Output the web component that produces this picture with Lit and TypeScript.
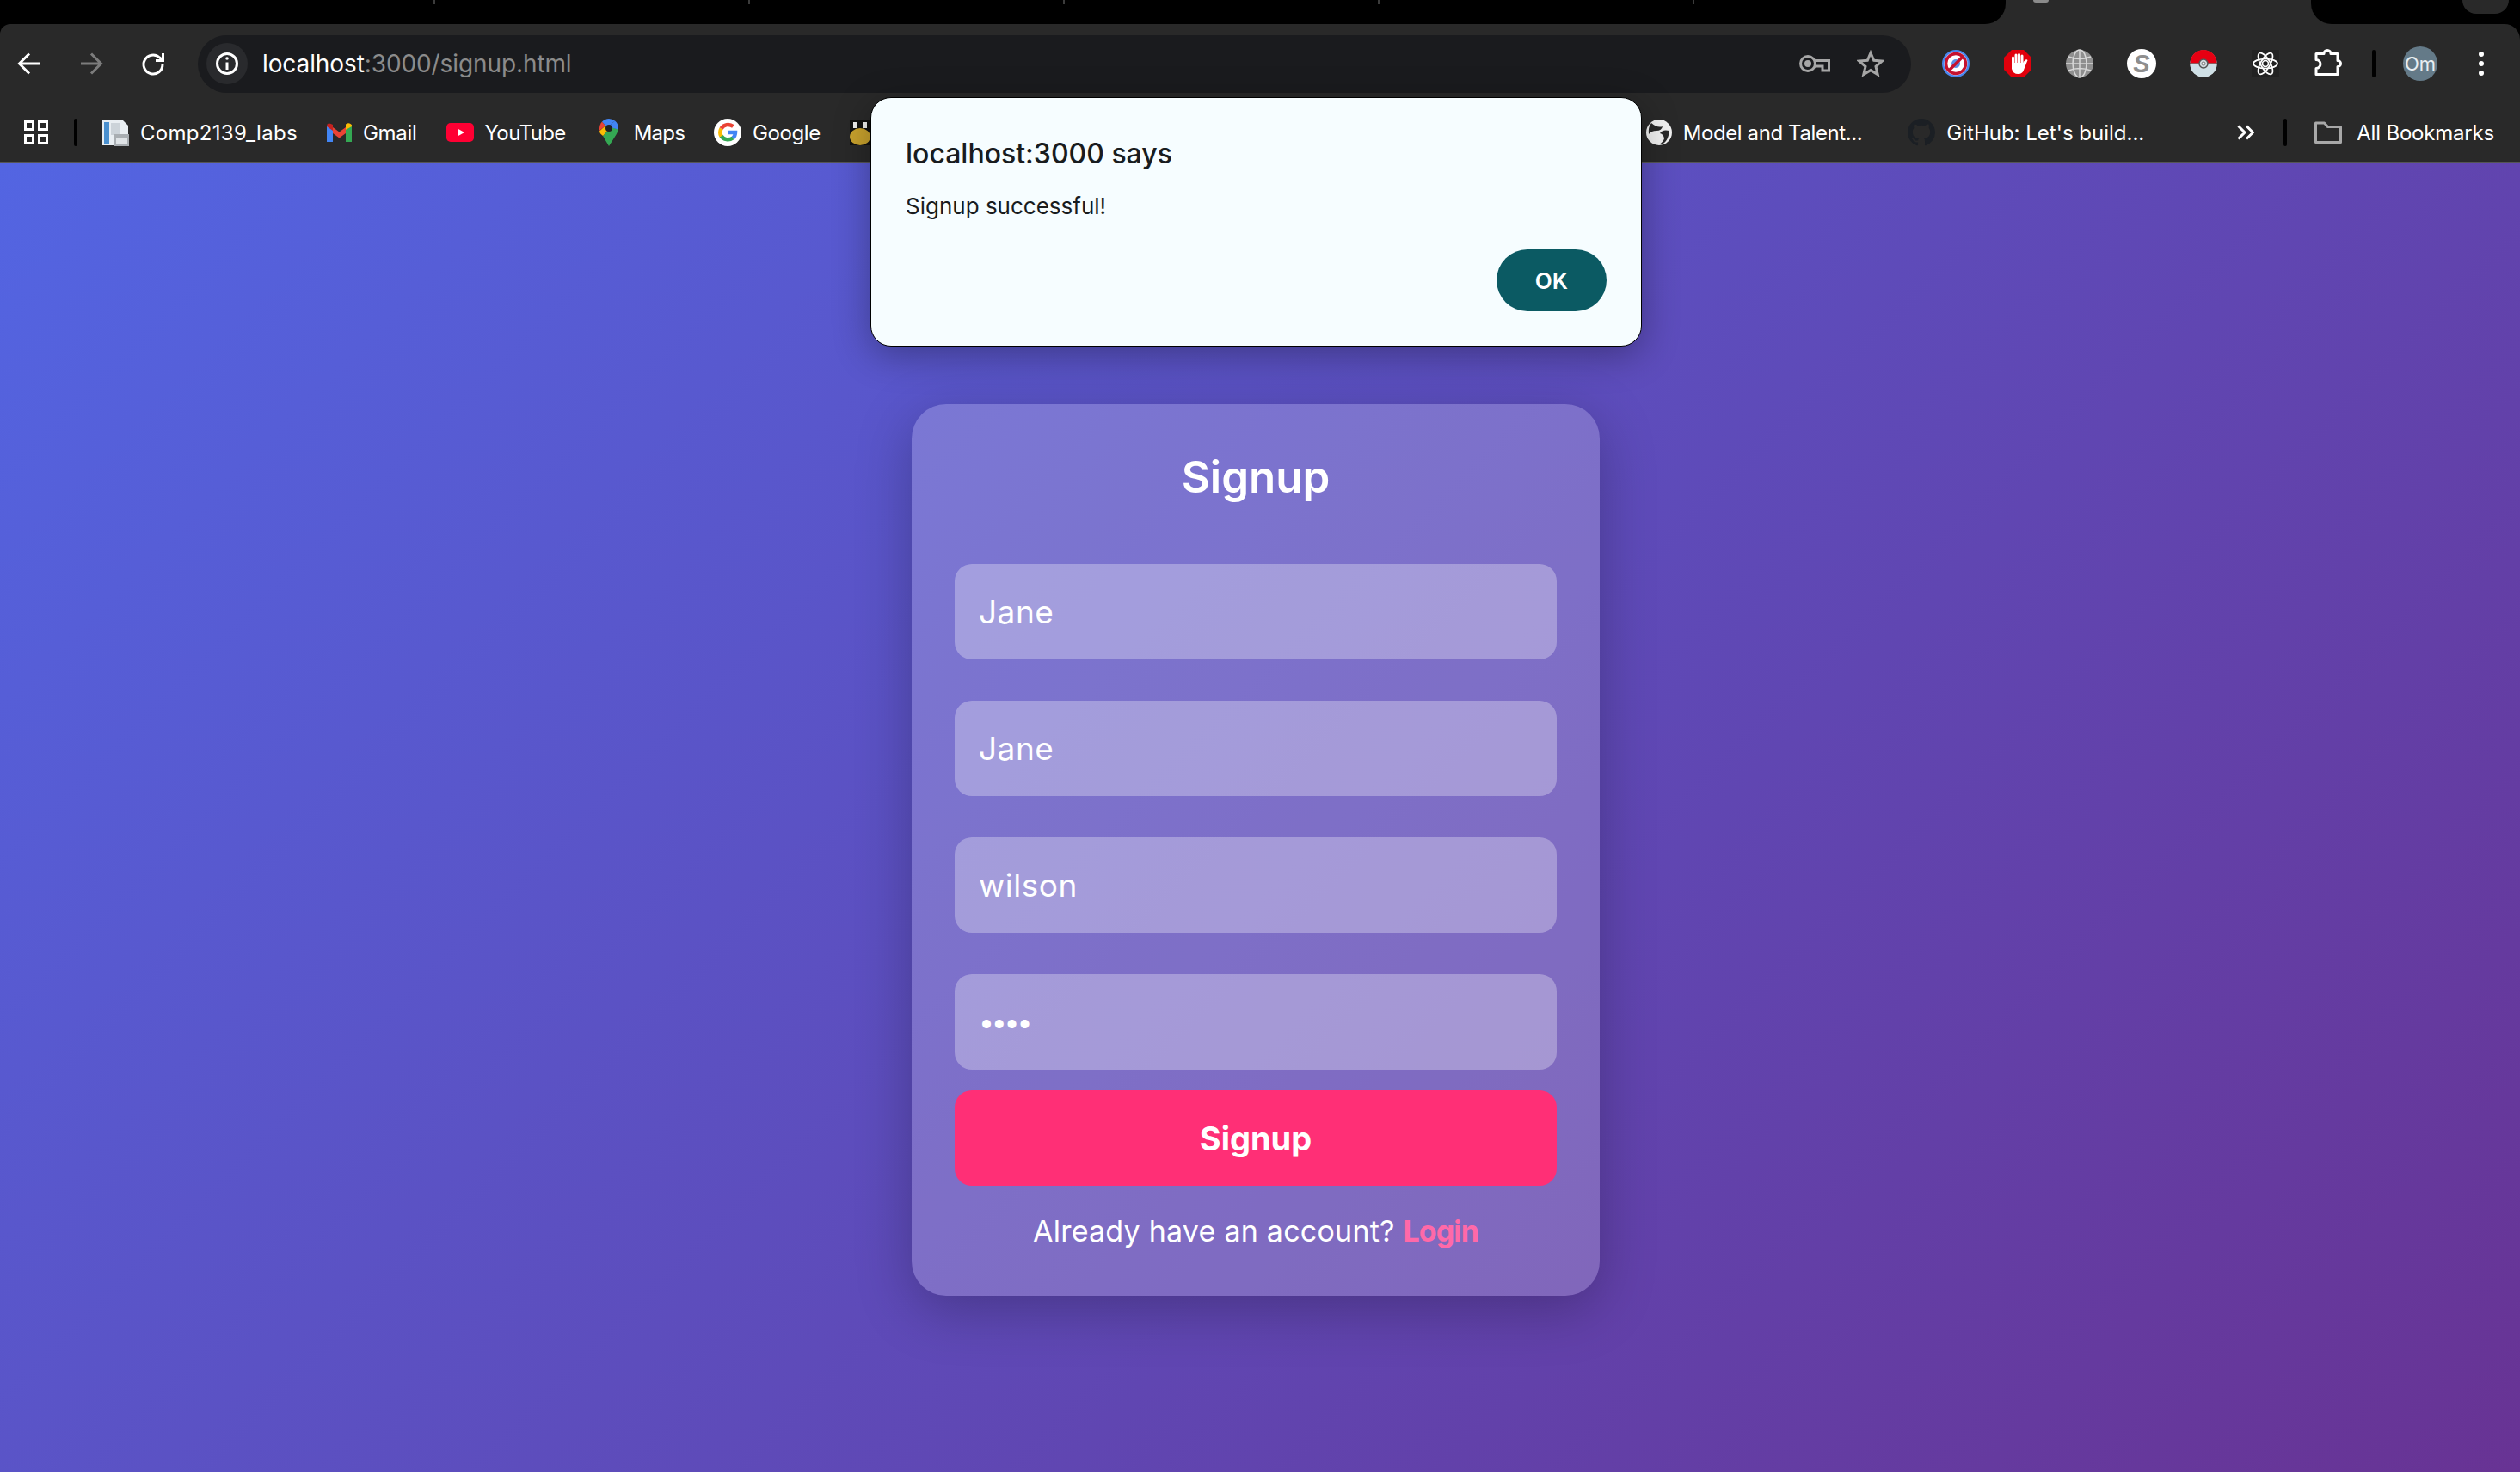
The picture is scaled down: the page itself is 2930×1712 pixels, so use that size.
import { LitElement, css, html } from 'lit'
import { customElement } from 'lit/decorators.js'

const nav = {
  back: html`<svg width="36" height="36" viewBox="0 0 36 36" fill="none" stroke="#fff" stroke-width="3"><path d="M30 18H7M18 6.500 6.500 18 18 29.500"/></svg>`,
  forward: html`<svg width="36" height="36" viewBox="0 0 36 36" fill="none" stroke="#7c7c7c" stroke-width="3"><path d="M6 18h23M18 6.500 29.500 18 18 29.500"/></svg>`,
  reload: html`<svg width="36" height="36" viewBox="0 0 36 36" fill="none" stroke="#fff" stroke-width="3"><path d="M29 19A11 11 0 1 1 25.500 11L29 14"/><path d="M29.500 6v8.500H21"/></svg>`,
  info: html`<svg width="36" height="36" viewBox="0 0 36 36" fill="none" stroke="#fff" stroke-width="3"><circle cx="18" cy="18" r="11.500"/><path d="M18 16.500V25"/><circle cx="18" cy="12" r="1.800" fill="#fff" stroke="none"/></svg>`,
  key: html`<svg width="36" height="20" viewBox="0 0 36 20" fill="none" stroke="#a6a6a6" stroke-width="3"><circle cx="10" cy="10" r="8.500"/><circle cx="10" cy="10" r="4" fill="#a6a6a6" stroke="none"/><path d="M18 6.500h16.500V18H27v-5H18.500"/></svg>`,
  star: html`<svg width="32" height="32" viewBox="0 0 32 32" fill="none" stroke="#a6a6a6" stroke-width="3" stroke-linejoin="miter"><path d="M16 3.500l3.700 8.800 9.500.8-7.200 6.200 2.200 9.300-8.200-5-8.200 5 2.200-9.300-7.200-6.200 9.500-.8z"/></svg>`,
}

const extensions = [
  html`<svg width="34" height="34" viewBox="0 0 34 34"><circle cx="17" cy="17" r="16" fill="#4a86ee"/><circle cx="17" cy="17" r="13.500" fill="#fff"/><circle cx="17" cy="17" r="5" fill="#5b8fe6"/><circle cx="17" cy="17" r="11.500" fill="none" stroke="#c5112f" stroke-width="3.500"/><path d="M25 9 9 25" stroke="#c5112f" stroke-width="3.500"/></svg>`,
  html`<svg width="34" height="34" viewBox="0 0 34 34"><path d="M10 1h14l9 9v14l-9 9H10l-9-9V10z" fill="#e1000c"/><g stroke="#fff" stroke-linecap="round" stroke-width="3"><path d="M11.500 10v11M15 7v13M18.500 6.500V20M22 8v12"/></g><path d="M10 16h13.500v-1l3.500-3 1.500 1-4 10q-1.500 6-7 6-6 0-7.500-6z" fill="#fff"/></svg>`,
  html`<svg width="34" height="34" viewBox="0 0 34 34" fill="none" stroke="#d8d8d8" stroke-width="1.500"><circle cx="17" cy="17" r="16" fill="#8f8f8f" stroke="none"/><path d="M17 1v32M1 17h32M4 9q13 5 26 0M4 25q13-5 26 0"/><ellipse cx="17" cy="17" rx="8" ry="16"/></svg>`,
  html`<svg width="34" height="34" viewBox="0 0 34 34"><circle cx="17" cy="17" r="17" fill="#fff"/><text x="17" y="27" text-anchor="middle" font-family="Liberation Sans" font-size="29" font-weight="700" font-style="italic" fill="#8e8e8e">S</text></svg>`,
  html`<svg width="32" height="32" viewBox="0 0 32 32"><circle cx="16" cy="16" r="15.500" fill="#fff"/><path d="M.5 17a15.500 14.500 0 0 0 31 0z" fill="#cfe0e6"/><path d="M.5 15.500a15.500 15.500 0 0 1 31 0z" fill="#e60012"/><path d="M0 16h32" stroke="#333" stroke-width="1"/><circle cx="16" cy="16" r="5" fill="#cfd8dc" stroke="#555" stroke-width="1.500"/><circle cx="16" cy="16" r="2" fill="#fff" stroke="#777"/></svg>`,
  html`<svg width="32" height="32" viewBox="0 0 32 32"><rect width="32" height="32" fill="#222"/><g fill="none" stroke="#fff" stroke-width="1.700"><ellipse cx="16" cy="16" rx="14" ry="5.500"/><ellipse cx="16" cy="16" rx="14" ry="5.500" transform="rotate(60 16 16)"/><ellipse cx="16" cy="16" rx="14" ry="5.500" transform="rotate(120 16 16)"/><circle cx="16" cy="16" r="3.500"/></g></svg>`,
  html`<svg width="36" height="36" viewBox="0 0 36 36" fill="none" stroke="#fff" stroke-width="3" stroke-linejoin="round"><path d="M5 6.500h9a4 4 0 0 1 8 0h8v8a3.500 3.500 0 0 1 0 7v9H5v-7a5 5 0 0 0 0-10z"/></svg>`,
]

const bookmarksLeft = [
  {
    label: 'Comp2139_labs',
    track: 0.3,
    icon: html`<svg width="32" height="32" viewBox="0 0 32 32"><path d="M1 1h23l7 7v23H1z" fill="#e9eef2"/><path d="M3 4h6v25H3z" fill="#4a90cf"/><path d="M11 5h10v14H11z" fill="#ccd3d9"/><path d="M15 18h17v14H15z" fill="#a9aeb2"/><path d="M17 22h13v8H17z" fill="#dfe3e6"/></svg>`,
  },
  {
    label: 'Gmail',
    track: -0.3,
    icon: html`<svg width="29" height="32" viewBox="0 0 29 22"><path d="M0 22V3l7 5v14z" fill="#4285f4"/><path d="M22 22V8l7-5v19z" fill="#34a853"/><path d="M7 12V5l7.500 5.500L22 5v7l-7.500 5.500z" fill="#ea4335"/><path d="M22 8V1.500q3-2 5.500-.5T29 4z" fill="#fbbc04"/><path d="M0 3.500Q0 1 2 .5T7 2v7L0 4z" fill="#c5221f"/></svg>`,
  },
  {
    label: 'YouTube',
    track: -0.6,
    icon: html`<svg width="32" height="32" viewBox="0 0 32 32"><rect y="5" width="32" height="22" rx="5" fill="#ff0033"/><path d="M13 11.500 21 16l-8 4.500z" fill="#fff"/></svg>`,
  },
  {
    label: 'Maps',
    track: -0.8,
    icon: html`<svg width="32" height="32" viewBox="0 0 32 32"><path d="M16 32 9 20l9-10 8.500 2q.5 3-2 6.500z" fill="#34a853"/><path d="M5 14.500q0 2.500 4 5.500l7-8-4-4z" fill="#fbbc04"/><path d="M8 3.500Q4.500 7 5 14l7-6z" fill="#ea4335"/><path d="M8 3.500Q11.500 0 16 0q4 0 7 2.500l-8 7-3-1.500z" fill="#4285f4"/><path d="M23 2.500Q27 6 27 11l-.5 1.500L18 10l-3-.5z" fill="#4285f4"/><circle cx="16" cy="11" r="4" fill="#222"/></svg>`,
  },
  {
    label: 'Google',
    track: -0.4,
    icon: html`<svg width="32" height="32" viewBox="0 0 32 32" fill="none" stroke-width="4.500"><circle cx="16" cy="16" r="16" fill="#fff"/><path d="M16 16h9a9.500 9.500 0 0 1-3 6.800" stroke="#4285f4"/><path d="M22 22.500a9.500 9.500 0 0 1-13.500-2.500" stroke="#34a853"/><path d="M8.500 20.500a9.500 9.500 0 0 1 0-9" stroke="#fbbc04"/><path d="M8.500 11.500a9.500 9.500 0 0 1 14-2.500" stroke="#ea4335"/></svg>`,
  },
]

const github = 'M8 0C3.58 0 0 3.58 0 8c0 3.54 2.29 6.53 5.47 7.59.4.07.55-.17.55-.38 0-.19-.01-.82-.01-1.49-2.01.37-2.53-.49-2.69-.94-.09-.23-.48-.94-.82-1.13-.28-.15-.68-.52-.01-.53.63-.01 1.08.58 1.23.82.72 1.21 1.87.87 2.33.66.07-.52.28-.87.51-1.07-1.78-.2-3.64-.89-3.64-3.95 0-.87.31-1.59.82-2.15-.08-.2-.36-1.02.08-2.12 0 0 .67-.21 2.2.82.64-.18 1.32-.27 2-.27.68 0 1.36.09 2 .27 1.53-1.04 2.2-.82 2.2-.82.44 1.1.16 1.92.08 2.12.51.56.82 1.27.82 2.15 0 3.07-1.87 3.75-3.65 3.95.29.25.54.73.54 1.48 0 1.07-.01 1.93-.01 2.2 0 .21.15.46.55.38A8.013 8.013 0 0016 8c0-4.42-3.58-8-8-8z'

@customElement('app-root')
export class AppRoot extends LitElement {
  render() {
    return html`
      <div class="strip">
        <div class="strip-left">
          ${[0, 1, 2, 3, 4].map(() => html`<span class="tab-stub"></span>`)}
        </div>
        <div class="active-tab"><span class="favicon"></span></div>
        <div class="strip-right"><span class="new-tab"></span></div>
      </div>

      <div class="toolbar">
        <div class="nav">${nav.back}${nav.forward}${nav.reload}</div>
        <div class="omnibox">
          <span class="chip">${nav.info}</span>
          <span class="url">localhost<span class="dim">:3000/signup.html</span></span>
          <span class="key">${nav.key}</span>
          <span class="star">${nav.star}</span>
        </div>
        <div class="extensions">
          ${extensions.map((icon) => html`<span class="ext">${icon}</span>`)}
        </div>
        <span class="tool-divider"></span>
        <span class="avatar">Om</span>
        <span class="menu"><i></i><i></i><i></i></span>
      </div>

      <div class="bookmarks">
        <svg class="apps" width="28" height="28" viewBox="0 0 28 28" fill="none" stroke="#fff" stroke-width="3">
          <path d="M1.500 1.500h9v9h-9zM17.500 1.500h9v9h-9zM1.500 17.500h9v9h-9zM17.500 17.500h9v9h-9z" />
        </svg>
        <span class="bar-divider"></span>
        <div class="marks">
          ${bookmarksLeft.map(
            (b) => html`<span class="mark">${b.icon}<span style="letter-spacing:${b.track}px">${b.label}</span></span>`
          )}
          <svg class="penguin" width="24" height="30" viewBox="0 0 24 30">
            <rect width="24" height="30" fill="#111" />
            <ellipse cx="12" cy="20" rx="12" ry="10" fill="#c9a22d" />
            <rect x="4" y="3" width="5" height="7" fill="#eee" />
            <rect x="15" y="3" width="5" height="7" fill="#eee" />
          </svg>
        </div>
        <div class="marks right">
          <span class="mark model">
            <svg width="30" height="30" viewBox="0 0 30 30">
              <circle cx="15" cy="15" r="15" fill="#f2f2f2" />
              <path d="M6 4q7 6 13 4-1 5-7 5T3 17Q2 9 6 4zM27 13q-8-2-11 3 4 1 5 6-1 4-6 7 10 0 12-16z" fill="#292929" />
            </svg>
            <span>Model and Talent...</span>
          </span>
          <span class="mark github">
            <svg width="32" height="32" viewBox="0 0 16 16"><path d=${github} fill="#1b1f24" /></svg>
            <span>GitHub: Let's build...</span>
          </span>
          <svg class="more" width="20" height="18" viewBox="0 0 20 18" fill="none" stroke="#fff" stroke-width="3">
            <path d="M1.500 1.500 9 9l-7.500 7.500M11 1.500 18.500 9 11 16.500" />
          </svg>
          <span class="bar-divider"></span>
          <span class="mark all">
            <svg width="32" height="26" viewBox="0 0 32 26" fill="none" stroke="#a8a8a8" stroke-width="3" stroke-linejoin="round">
              <path d="M1.500 2h10l4 4.500h15v18h-29z" />
            </svg>
            <span>All Bookmarks</span>
          </span>
        </div>
      </div>

      <main class="page">
        <section class="card">
          <h1>Signup</h1>
          <form class="fields">
            <input type="text" value="Jane" />
            <input type="text" value="Jane" />
            <input type="text" value="wilson" />
            <input type="password" value="abcd" />
          </form>
          <button class="submit" type="button">Signup</button>
          <p class="foot">Already have an account? <a>Login</a></p>
        </section>
      </main>

      <div class="dialog">
        <div class="dialog-title">localhost:3000 says</div>
        <div class="dialog-msg">Signup successful!</div>
        <div class="dialog-actions"><button type="button">OK</button></div>
      </div>
    `
  }

  static get styles() {
    return css`
      :host {
        display: flex;
        flex-direction: column;
        position: relative;
        width: 2930px;
        height: 1712px;
        overflow: hidden;
        background: #000;
        font-family: Inter, 'Liberation Sans', sans-serif;
      }

      .strip {
        display: flex;
        height: 28px;
        background: #292929;
      }

      .strip-left {
        display: flex;
        width: 2332px;
        padding-left: 140px;
        box-sizing: border-box;
        background: #000;
        border-bottom-right-radius: 24px;
      }

      .tab-stub {
        width: 364px;
        height: 5px;
        border-right: 2px solid #3c3c3c;
      }

      .active-tab {
        width: 355px;
        padding-left: 32px;
        box-sizing: border-box;
      }

      .favicon {
        display: block;
        width: 18px;
        height: 3px;
        background: #8a8a8a;
        border-radius: 0 0 9px 9px;
      }

      .strip-right {
        flex: 1;
        padding-left: 176px;
        background: #000;
        border-bottom-left-radius: 24px;
      }

      .new-tab {
        display: block;
        width: 54px;
        height: 16px;
        background: #292929;
        border-radius: 0 0 20px 20px;
      }

      .toolbar {
        display: flex;
        align-items: center;
        height: 92px;
        padding: 0 24px 0 16px;
        background: #292929;
        border-radius: 12px 18px 0 0;
      }

      .nav {
        display: flex;
        gap: 36px;
        margin-right: 34px;
      }

      .nav svg {
        display: block;
      }

      .omnibox {
        display: flex;
        align-items: center;
        width: 1992px;
        height: 67px;
        box-sizing: border-box;
        padding: 0 31px 0 10px;
        background: #1a1b1e;
        border-radius: 34px;
      }

      .chip {
        display: flex;
        align-items: center;
        justify-content: center;
        width: 48px;
        height: 48px;
        background: #292a2d;
        border-radius: 50%;
      }

      .url {
        flex: 1;
        margin-left: 17px;
        color: #fff;
        font-size: 28px;
        letter-spacing: -0.1px;
      }

      .dim {
        color: #8b8b8b;
      }

      .key {
        display: flex;
        margin-right: 31px;
      }

      .star {
        display: flex;
      }

      .extensions {
        display: flex;
        margin-left: 16px;
      }

      .ext {
        display: flex;
        align-items: center;
        justify-content: center;
        width: 72px;
        height: 40px;
      }

      .tool-divider {
        width: 4px;
        height: 32px;
        margin: 0 32px 0 16px;
        background: #000;
        border-radius: 2px;
      }

      .avatar {
        display: flex;
        align-items: center;
        justify-content: center;
        width: 40px;
        height: 40px;
        background: #647a88;
        border-radius: 50%;
        color: #e8eef2;
        font-size: 22px;
      }

      .menu {
        display: flex;
        flex-direction: column;
        gap: 5px;
        margin-left: 48px;
      }

      .menu i {
        width: 6px;
        height: 6px;
        background: #fff;
        border-radius: 50%;
      }

      .bookmarks {
        display: flex;
        align-items: center;
        height: 70px;
        padding: 0 30px 0 28px;
        box-sizing: border-box;
        background: #292929;
        border-bottom: 2px solid #555;
        color: #fff;
        font-size: 24px;
        white-space: nowrap;
      }

      .bar-divider {
        flex: none;
        width: 4px;
        height: 32px;
        background: #000;
        border-radius: 2px;
      }

      .apps {
        margin-right: 30px;
      }

      .marks {
        display: flex;
        align-items: center;
        gap: 34px;
        margin-left: 28px;
      }

      .marks.right {
        margin-left: auto;
        gap: 0;
      }

      .mark {
        display: flex;
        align-items: center;
        gap: 13px;
      }

      .mark svg {
        flex: none;
      }

      .model span {
        letter-spacing: -0.4px;
      }

      .github {
        margin-left: 53px;
      }

      .more {
        margin: 0 34px 0 108px;
      }

      .mark.all {
        gap: 17px;
        margin-left: 32px;
      }

      .all span {
        letter-spacing: -0.2px;
      }

      .page {
        flex: 1;
        display: flex;
        justify-content: center;
        align-items: flex-start;
        padding: 280px 10px 0 0;
        background: linear-gradient(135deg, #5365e2 0%, #683394 100%);
      }

      .card {
        display: flex;
        flex-direction: column;
        width: 800px;
        box-sizing: border-box;
        padding: 50px 50px 49px;
        background: rgba(255, 255, 255, 0.2);
        border-radius: 40px;
        box-shadow: 0 16px 64px rgba(0, 0, 0, 0.25);
        color: #fff;
      }

      h1 {
        margin: 0 0 66px;
        font-size: 51px;
        font-weight: 600;
        line-height: 70px;
        text-align: center;
      }

      .fields {
        display: flex;
        flex-direction: column;
        gap: 48px;
      }

      input {
        display: block;
        height: 111px;
        box-sizing: border-box;
        padding: 0 28px;
        border: 0;
        outline: 0;
        background: rgba(255, 255, 255, 0.3);
        border-radius: 20px;
        color: #fff;
        font-family: inherit;
        font-size: 37px;
        letter-spacing: 0.5px;
      }

      input[type='password'] {
        font-size: 32px;
        letter-spacing: -3.2px;
      }

      .submit {
        height: 111px;
        margin-top: 24px;
        border: 0;
        background: #ff2f76;
        border-radius: 20px;
        color: #fff;
        font-family: inherit;
        font-size: 38px;
        font-weight: 700;
      }

      .foot {
        margin: 27px 0 0;
        font-size: 34px;
        letter-spacing: 0.23px;
        line-height: 52px;
        text-align: center;
      }

      .foot a {
        color: #ff69a8;
        font-weight: 700;
        letter-spacing: -0.9px;
      }

      .dialog {
        position: absolute;
        left: 1012px;
        top: 113px;
        width: 897px;
        height: 290px;
        box-sizing: border-box;
        padding: 43px 40px 0;
        background: #f6fdff;
        border: 1px solid #000;
        border-radius: 24px;
        box-shadow: 0 10px 44px rgba(0, 0, 0, 0.32);
        color: #191c1e;
      }

      .dialog-title {
        font-size: 32px;
        font-weight: 500;
        line-height: 44px;
      }

      .dialog-msg {
        margin-top: 21px;
        font-size: 26px;
        line-height: 36px;
      }

      .dialog-actions {
        display: flex;
        justify-content: flex-end;
        margin-top: 32px;
      }

      .dialog-actions button {
        width: 128px;
        height: 72px;
        border: 0;
        background: #0b5a63;
        border-radius: 36px;
        color: #fff;
        font-family: inherit;
        font-size: 26px;
        font-weight: 600;
      }
    `
  }
}
